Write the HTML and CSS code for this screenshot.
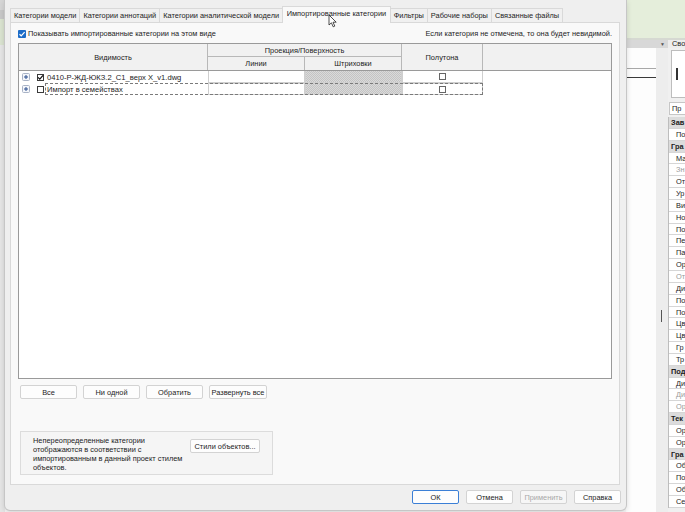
FILE: index.html
```html
<!DOCTYPE html>
<html>
<head>
<meta charset="utf-8">
<link rel="stylesheet" href="styles.css">
</head>
<body>
<div class="screen">
  <div class="leftstrip"></div>
  <div class="dialog">
    <div class="tabs">
      <div class="tab">Категории модели</div>
      <div class="tab">Категории аннотаций</div>
      <div class="tab">Категории аналитической модели</div>
      <div class="tab active">Импортированные категории</div>
      <div class="tab">Фильтры</div>
      <div class="tab">Рабочие наборы</div>
      <div class="tab">Связанные файлы</div>
    </div>
    <div class="panel">
      <div class="toprow">
        <div class="chk"><span class="bluecb"><svg width="8" height="8" viewBox="0 0 8 8"><path d="M1.5 4.2 L3.2 5.8 L6.6 2.2" fill="none" stroke="#fff" stroke-width="1.2"/></svg></span>Показывать импортированные категории на этом виде</div>
        <div class="hint">Если категория не отмечена, то она будет невидимой.</div>
      </div>
      <div class="table">
        <div class="thead">
          <div class="th c-vis">Видимость</div>
          <div class="th c-proj">Проекция/Поверхность</div>
          <div class="th c-lin">Линии</div>
          <div class="th c-hat">Штриховки</div>
          <div class="th c-half">Полутона</div>
          <div class="th c-rest"></div>
        </div>
        <div class="trow">
          <div class="tree">
            <svg class="plus" width="8" height="8" viewBox="0 0 8 8"><rect x="0.5" y="0.5" width="7" height="7" rx="1" fill="#f4f6fa" stroke="#a9b3c6"/><path d="M2 4h4M4 2v4" stroke="#2b4f8f" stroke-width="1"/></svg>
            <span class="cb"><svg width="7" height="7" viewBox="0 0 7 7"><path d="M1 3.4 L2.8 5.2 L6 1.4" fill="none" stroke="#111" stroke-width="1.2"/></svg></span>
          </div>
          <div class="name">0410-Р-ЖД-ЮКЗ.2_С1_верх X_v1.dwg</div>
          <div class="cell"></div>
          <div class="cell hatch"></div>
          <div class="cell center"><span class="cb small"></span></div>
          <div></div>
        </div>
        <div class="trow">
          <div class="tree">
            <svg class="plus" width="8" height="8" viewBox="0 0 8 8"><rect x="0.5" y="0.5" width="7" height="7" rx="1" fill="#f4f6fa" stroke="#a9b3c6"/><path d="M2 4h4M4 2v4" stroke="#2b4f8f" stroke-width="1"/></svg>
            <span class="cb"></span>
          </div>
          <div class="focus">
            <div class="name">Импорт в семействах</div>
            <div class="cell"></div>
            <div class="cell hatch"></div>
            <div class="cell center"><span class="cb small"></span></div>
          </div>
          <div></div>
        </div>
      </div>
      <div class="btns">
        <div class="btn">Все</div>
        <div class="btn">Ни одной</div>
        <div class="btn">Обратить</div>
        <div class="btn wide">Развернуть все</div>
      </div>
      <div class="group">
        <div class="gtext">Непереопределенные категории отображаются в соответствии с импортированным в данный проект стилем объектов.</div>
        <div class="btn gbtn">Стили объектов...</div>
      </div>
    </div>
    <div class="footer">
      <div class="btn fbtn ok">ОК</div>
      <div class="btn fbtn">Отмена</div>
      <div class="btn fbtn disabled">Применить</div>
      <div class="btn fbtn">Справка</div>
    </div>
    <svg class="cursor" width="10" height="14" viewBox="0 0 10 14"><path d="M1 1 L1 11 L3.4 8.8 L5.2 12.8 L6.8 12.1 L5 8.2 L8.2 8.2 Z" fill="#fff" stroke="#222" stroke-width="0.8" stroke-linejoin="round"/></svg>
  </div>
  <div class="app">
    <div class="green"></div>
    <div class="sepline"></div>
    <div class="bar">
      <div class="bar-left"><span class="pin">&#9660;</span></div>
      <div class="bar-right">Сво</div>
    </div>
    <div class="appmain">
      <div class="canvas">
        <div class="ln1"></div>
        <div class="ln2"></div>
      </div>
      <div class="gripcol"><div class="grip"></div></div>
      <div class="props">
        <div class="typebox"><div class="typeicon"></div></div>
        <div class="propsel">Пр</div>
        <div class="plist">
          <div class="ph">Зав</div>
          <div class="pr">По</div>
          <div class="ph">Гра</div>
          <div class="pr">Ма</div>
          <div class="pr dim">Зн</div>
          <div class="pr">От</div>
          <div class="pr">Ур</div>
          <div class="pr">Ви</div>
          <div class="pr">Но</div>
          <div class="pr">По</div>
          <div class="pr">Пе</div>
          <div class="pr">Па</div>
          <div class="pr">Ор</div>
          <div class="pr dim">От</div>
          <div class="pr">Ди</div>
          <div class="pr">По</div>
          <div class="pr">По</div>
          <div class="pr">Цв</div>
          <div class="pr">Цв</div>
          <div class="pr">Гр</div>
          <div class="pr">Тр</div>
          <div class="ph">Под</div>
          <div class="pr">Ди</div>
          <div class="pr dim">Ди</div>
          <div class="pr dim">Ор</div>
          <div class="ph">Тек</div>
          <div class="pr">Ор</div>
          <div class="pr">Ор</div>
          <div class="ph">Гра</div>
          <div class="pr">Об</div>
          <div class="pr">По</div>
          <div class="pr">Об</div>
          <div class="pr">Се</div>
        </div>
      </div>
    </div>
  </div>
</div>
</body>
</html>
```
FILE: styles.css
```css
* { box-sizing: border-box; margin: 0; padding: 0; }
html, body { width: 685px; height: 512px; overflow: hidden; }
body {
  font-family: "Liberation Sans", Arial, sans-serif;
  font-size: 7.4px;
  color: #1c1c1c;
  background: #f7f7f7;
}
.screen { display: flex; height: 512px; }

.leftstrip {
  width: 5px;
  background: linear-gradient(#d6d6d6 0 10px, #c8c8c8 10px 19px, #dbe4d1 19px 45px, #e6e6e6 45px 100%);
}

.dialog {
  width: 621px;
  height: 510px;
  background: #efefef;
  display: flex;
  flex-direction: column;
  border-radius: 0 0 5px 5px;
  box-shadow: 0 0 0 1px #c6c6c6, 0 2px 6px rgba(0,0,0,0.18);
  position: relative;
  z-index: 2;
}

.tabs {
  display: flex;
  align-items: flex-end;
  height: 16px;
  margin-top: 6px;
  padding-left: 5px;
}
.tab {
  height: 14px;
  line-height: 13px;
  padding: 0 3px;
  border: 1px solid #d9d9d9;
  border-bottom: none;
  margin-right: -1px;
  background: #f0f0f0;
  white-space: nowrap;
}
.tab.active {
  height: 17px;
  line-height: 14px;
  padding: 0 3.5px;
  background: #f9f9f9;
  margin-bottom: -1px;
  position: relative;
  z-index: 3;
}

.panel {
  margin: 0 6px 0 5px;
  height: 463px;
  background: #f9f9f9;
  border: 1px solid #d9d9d9;
  padding: 4px 7px 0 7px;
  display: flex;
  flex-direction: column;
}
.toprow {
  height: 13px;
  margin-bottom: 3px;
  display: flex;
  justify-content: space-between;
  align-items: center;
}
.chk { display: flex; align-items: center; }
.bluecb {
  width: 8px; height: 8px;
  background: #1c6cc8;
  border-radius: 1px;
  margin-right: 2px;
  display: flex;
}
.hint { white-space: nowrap; }

.table {
  height: 336px;
  border: 1px solid #9a9a9a;
  background: #fff;
}
.thead {
  display: grid;
  grid-template-columns: 189px 97px 97px 81px 1fr;
  grid-template-rows: 13px 13px;
  background: #f1f1f1;
  border-bottom: 1px solid #9a9a9a;
}
.th {
  display: flex;
  align-items: center;
  justify-content: center;
  border-right: 1px solid #b8b8b8;
}
.c-vis { grid-row: 1 / 3; grid-column: 1; }
.c-proj { grid-row: 1; grid-column: 2 / 4; border-bottom: 1px solid #b8b8b8; }
.c-lin { grid-row: 2; grid-column: 2; }
.c-hat { grid-row: 2; grid-column: 3; }
.c-half { grid-row: 1 / 3; grid-column: 4; }
.c-rest { grid-row: 1 / 3; grid-column: 5; border-right: none; }

.trow {
  display: grid;
  grid-template-columns: 26px 163px 97px 97px 81px 1fr;
  height: 12px;
}
.tree { display: flex; align-items: center; padding-left: 3px; }
.plus { margin-right: 7px; }
.cb {
  width: 7px; height: 7px;
  border: 1px solid #3a3a3a;
  background: #fff;
  display: inline-flex;
  align-items: center;
  justify-content: center;
}
.cb svg { margin: -1px; }
.cb.small { border-color: #666; }
.name { display: flex; align-items: center; padding-left: 2px; white-space: nowrap; font-size: 7.6px; }
.cell { border: 1px solid #cfcfcf; border-top: none; background: #fff; }
.center { display: flex; align-items: center; justify-content: center; }
.hatch {
  background: repeating-conic-gradient(#c4c4c4 0 25%, #dadada 0 50%) 0 0 / 2px 2px;
  border-color: #d0d0d0;
}
.focus {
  grid-column: 2 / 6;
  display: grid;
  grid-template-columns: 163px 97px 97px 81px;
  outline: 1px dashed #7a7a7a;
  outline-offset: -1px;
}
.focus .cell { border-top: 1px solid #cfcfcf; }

.btns {
  display: flex;
  gap: 6px;
  margin-top: 6px;
  padding-left: 2px;
}
.btn {
  width: 57px;
  height: 14px;
  background: #fdfdfd;
  border: 1px solid #d3d3d3;
  border-radius: 2px;
  display: flex;
  align-items: center;
  justify-content: center;
  white-space: nowrap;
}
.btn.wide { width: 58px; }

.group {
  margin: 32px 0 0 2px;
  width: 253px;
  height: 44px;
  border: 1px solid #dcdcdc;
  background: #f5f5f5;
  display: flex;
  padding: 4px 0 0 12px;
}
.gtext { width: 152px; line-height: 9px; }
.gbtn { width: 70px; margin: 3px 0 0 5px; }

.footer {
  display: flex;
  justify-content: flex-end;
  gap: 7px;
  padding: 5px 5px 0 0;
}
.fbtn { width: 47px; }
.ok { border-color: #3b7fd6; }
.disabled { color: #a8a8a8; background: #f6f6f6; }

.cursor { position: absolute; left: 323px; top: 14px; z-index: 10; }

.app { width: 59px; display: flex; flex-direction: column; }
.green { height: 38px; background: #e5eedb; }
.sepline { height: 2px; background: #d6d9d2; }
.bar { height: 8px; display: flex; }
.bar-left {
  width: 42px;
  background: #d8d8d8;
  display: flex;
  justify-content: flex-end;
  align-items: center;
  padding-right: 3px;
}
.pin { font-size: 5px; color: #555; }
.bar-right { width: 17px; background: #ededed; line-height: 8px; padding-left: 4px; overflow: hidden; white-space: nowrap; }
.appmain { flex: 1; display: flex; }
.canvas { width: 30px; background: #fdfdfd; padding-top: 20px; }
.ln1 { height: 1px; background: #a8a8a8; }
.ln2 { height: 1px; background: #3a3a3a; margin-top: 8px; }
.gripcol { width: 12px; background: #ededed; padding: 262px 0 0 5px; }
.grip { width: 1px; height: 12px; background: #555; }
.props { width: 17px; background: #f0f0f0; overflow: hidden; }
.typebox {
  margin: 2px 0 0 3px;
  height: 48px;
  border: 1px solid #bdbdbd;
  border-right: none;
  background: #fff;
  padding: 17px 0 0 4px;
}
.typeicon { width: 2px; height: 12px; background: #333; }
.propsel {
  margin: 4px 0 0 1px;
  height: 13px;
  border: 1px solid #c6c6c6;
  border-right: none;
  background: #fff;
  padding-left: 2px;
  line-height: 11px;
  white-space: nowrap;
}
.plist { margin-top: 2px; border-left: 1px solid #bdbdbd; }
.ph, .pr {
  height: 11.85px;
  line-height: 11px;
  white-space: nowrap;
  border-bottom: 1px solid #d6d6d6;
}
.ph { background: #dcdcdc; padding-left: 2px; font-weight: bold; }
.pr { background: #fff; padding-left: 7px; }
.pr.dim { color: #9a9a9a; }
```
